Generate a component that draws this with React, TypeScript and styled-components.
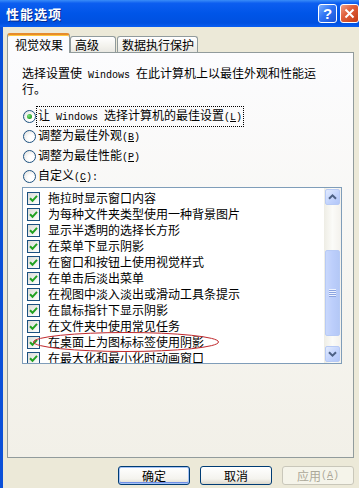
import styled, { createGlobalStyle } from "styled-components";

const GlobalStyle = createGlobalStyle`
  html, body {
    margin: 0;
    padding: 0;
  }
  body {
    width: 359px;
    height: 488px;
    overflow: hidden;
    background: #ece9d8;
    color: #000;
    font-family: "Noto Sans CJK SC", "Noto Sans", sans-serif;
    font-size: 12px;
  }
`;

const Window = styled.div`
  width: 359px;
  height: 488px;
  display: flex;
  flex-direction: column;
  overflow: hidden;
`;

const TitleBar = styled.div`
  height: 27px;
  flex-shrink: 0;
  display: flex;
  align-items: center;
  gap: 3px;
  padding-left: 6px;
  background: linear-gradient(
    #3a8df8 0%,
    #0c5ef0 12%,
    #0055e8 50%,
    #0050e0 85%,
    #0a5ef2 100%
  );
`;

const Title = styled.div`
  flex: 1;
  color: #fff;
  font-weight: bold;
  font-size: 13px;
  letter-spacing: 1px;
  text-shadow: 1px 1px 0 #0a2a8c;
`;

const CaptionButton = styled.div<{ $close?: boolean }>`
  width: 19px;
  height: 19px;
  box-sizing: border-box;
  border: 1px solid #fff;
  border-radius: 3px;
  display: flex;
  align-items: center;
  justify-content: center;
  color: #fff;
  font-family: "Liberation Sans", sans-serif;
  font-weight: bold;
  font-size: 15px;
  background: ${(p) =>
    p.$close
      ? "linear-gradient(135deg, #f0a088 0%, #e0603c 40%, #c43a14 100%)"
      : "linear-gradient(135deg, #7fb2ff 0%, #2f74f4 45%, #1a52d6 100%)"};
`;

const Body = styled.div`
  flex: 1;
  display: flex;
  flex-direction: column;
  border-left: 3px solid #0b50d8;
  padding: 6px 5px 0 4px;
`;

const TabStrip = styled.div`
  display: flex;
  align-items: flex-end;
  height: 20px;
  position: relative;
  z-index: 1;
`;

const Tab = styled.div<{ $active?: boolean; $width: number; $gap?: number }>`
  box-sizing: border-box;
  width: ${(p) => p.$width}px;
  margin-left: ${(p) => p.$gap ?? 0}px;
  height: ${(p) => (p.$active ? 20 : 16)}px;
  margin-bottom: ${(p) => (p.$active ? 0 : 1)}px;
  padding: ${(p) => (p.$active ? "1px 0 0 7px" : "0 0 0 4px")};
  display: flex;
  align-items: center;
  line-height: 13px;
  border: 1px solid #919b9c;
  border-bottom: none;
  border-radius: 3px 3px 0 0;
  ${(p) =>
    p.$active
      ? `
    background: #fcfcfe;
    border-top: 2px solid #e68b2c;
    box-shadow: inset 0 1px 0 #ffc73c;
  `
      : `
    background: linear-gradient(#ffffff, #f3f2ed 60%, #e9e8e2);
  `}
`;

const Panel = styled.div`
  box-sizing: border-box;
  height: 406px;
  margin-top: -1px;
  border: 1px solid #919b9c;
  background: linear-gradient(#fcfcfe, #f6f5f0 60%, #f2f0e8);
  padding: 13px 0 0 14px;
`;

const Description = styled.p`
  margin: 0;
  line-height: 13px;
`;

const Latin = styled.span`
  font-family: "Liberation Mono", monospace;
  font-size: 10px;
`;

const RadioGroup = styled.div`
  margin-top: 11px;
  display: flex;
  flex-direction: column;
`;

const RadioRow = styled.div`
  height: 20px;
  display: flex;
  align-items: center;
`;

const RadioCircle = styled.span<{ $checked?: boolean }>`
  box-sizing: border-box;
  width: 13px;
  height: 13px;
  margin-left: 1px;
  border-radius: 50%;
  border: 1px solid #1c5180;
  background: radial-gradient(circle at 65% 65%, #ffffff 30%, #dcdcd7 100%);
  display: flex;
  align-items: center;
  justify-content: center;

  &::after {
    content: "";
    display: ${(p) => (p.$checked ? "block" : "none")};
    width: 5px;
    height: 5px;
    border-radius: 50%;
    background: radial-gradient(circle at 35% 35%, #7ee07e, #21a121 70%);
  }
`;

const RadioLabel = styled.span<{ $focus?: boolean }>`
  padding: 1px;
  line-height: 14px;
  border: 1px dotted ${(p) => (p.$focus ? "#000" : "transparent")};
`;

const ListBox = styled.div`
  box-sizing: border-box;
  margin-top: 1px;
  width: 320px;
  height: 177px;
  border: 1px solid #7f9db9;
  background: #fff;
  display: flex;
`;

const ItemList = styled.div`
  flex: 1;
  overflow: hidden;
  padding: 2px 0 0 4px;
`;

const Item = styled.div`
  position: relative;
  height: 16px;
  display: flex;
  align-items: center;
  white-space: nowrap;
`;

const CheckBox = styled.span`
  box-sizing: border-box;
  width: 13px;
  height: 13px;
  flex-shrink: 0;
  border: 1px solid #1c5180;
  background: linear-gradient(135deg, #dcdcd7, #ffffff);
  display: flex;
  align-items: center;
  justify-content: center;
`;

const ItemText = styled.span`
  margin-left: 8px;
  line-height: 14px;
`;

const Mark = styled.svg`
  position: absolute;
  left: 5px;
  top: -3px;
  pointer-events: none;
`;

const ScrollBar = styled.div`
  width: 17px;
  box-sizing: border-box;
  padding: 1px;
  display: flex;
  flex-direction: column;
  background: linear-gradient(90deg, #eeede5, #fbfbf8 50%, #f3f1ec);
`;

const ScrollButton = styled.div`
  box-sizing: border-box;
  height: 16px;
  border: 1px solid #b7caf5;
  border-radius: 2px;
  background: linear-gradient(135deg, #e2ebfe, #c3d4fd 55%, #b2c6f8);
  display: flex;
  align-items: center;
  justify-content: center;
`;

const Track = styled.div`
  flex: 1;
  display: flex;
  flex-direction: column;
`;

const Thumb = styled.div`
  box-sizing: border-box;
  margin-top: 45px;
  height: 86px;
  border: 1px solid #b7caf5;
  border-radius: 2px;
  background: linear-gradient(90deg, #c9d8fc, #bccefb 50%, #b4c8f6);
  display: flex;
  align-items: center;
  justify-content: center;
`;

const Grip = styled.div`
  width: 7px;
  height: 8px;
  background: repeating-linear-gradient(
    #eef3ff 0px,
    #eef3ff 1px,
    #8ca4e0 1px,
    #8ca4e0 2px
  );
`;

const Footer = styled.div`
  display: flex;
  justify-content: flex-end;
  gap: 10px;
  margin-top: 8px;
`;

const Button = styled.div<{ $default?: boolean; $disabled?: boolean }>`
  box-sizing: border-box;
  width: 72px;
  height: 19px;
  border-radius: 3px;
  display: flex;
  align-items: center;
  justify-content: center;
  line-height: 14px;
  border: 1px solid ${(p) => (p.$disabled ? "#c9c7ba" : "#003c74")};
  color: ${(p) => (p.$disabled ? "#aca899" : "#000")};
  background: ${(p) =>
    p.$disabled
      ? "#f5f4ea"
      : "linear-gradient(#ffffff, #f4f3ee 70%, #dcd8cc)"};
  box-shadow: ${(p) =>
    p.$default
      ? "inset 0 0 0 1px #a6c3f5, inset 0 -1px 0 1px #6f8fe6"
      : "none"};
`;

const items = [
  "拖拉时显示窗口内容",
  "为每种文件夹类型使用一种背景图片",
  "显示半透明的选择长方形",
  "在菜单下显示阴影",
  "在窗口和按钮上使用视觉样式",
  "在单击后淡出菜单",
  "在视图中淡入淡出或滑动工具条提示",
  "在鼠标指针下显示阴影",
  "在文件夹中使用常见任务",
  "在桌面上为图标标签使用阴影",
  "在最大化和最小化时动画窗口",
];

function Check() {
  return (
    <svg width="9" height="9" viewBox="0 0 9 9">
      <path d="M1 4.2 L3.5 6.8 L8 1.8" stroke="#21a121" strokeWidth="2" fill="none" />
    </svg>
  );
}

function Arrow({ down }: { down?: boolean }) {
  return (
    <svg width="9" height="6" viewBox="0 0 9 6">
      <path
        d={down ? "M1 1.2 L4.5 4.6 L8 1.2" : "M1 4.8 L4.5 1.4 L8 4.8"}
        stroke="#4d6185"
        strokeWidth="2"
        fill="none"
      />
    </svg>
  );
}

function Key({ k }: { k: string }) {
  return (
    <Latin>
      (<u>{k}</u>)
    </Latin>
  );
}

function App() {
  return (
    <>
      <GlobalStyle />
      <Window>
        <TitleBar>
          <Title>性能选项</Title>
          <CaptionButton>?</CaptionButton>
          <CaptionButton $close>
            <svg width="11" height="11" viewBox="0 0 11 11">
              <path d="M1.5 1.5 L9.5 9.5 M9.5 1.5 L1.5 9.5" stroke="#fff" strokeWidth="2" />
            </svg>
          </CaptionButton>
        </TitleBar>
        <Body>
          <TabStrip>
            <Tab $active $width={63}>视觉效果</Tab>
            <Tab $width={46}>高级</Tab>
            <Tab $width={81} $gap={1}>数据执行保护</Tab>
          </TabStrip>
          <Panel>
            <Description>
              选择设置使<Latin> Windows </Latin>在此计算机上以最佳外观和性能运
              <br />
              行。
            </Description>
            <RadioGroup>
              <RadioRow>
                <RadioCircle $checked />
                <RadioLabel $focus>
                  让<Latin> Windows </Latin>选择计算机的最佳设置<Key k="L" />
                </RadioLabel>
              </RadioRow>
              <RadioRow>
                <RadioCircle />
                <RadioLabel>
                  调整为最佳外观<Key k="B" />
                </RadioLabel>
              </RadioRow>
              <RadioRow>
                <RadioCircle />
                <RadioLabel>
                  调整为最佳性能<Key k="P" />
                </RadioLabel>
              </RadioRow>
              <RadioRow>
                <RadioCircle />
                <RadioLabel>
                  自定义<Key k="C" />
                  <Latin>:</Latin>
                </RadioLabel>
              </RadioRow>
            </RadioGroup>
            <ListBox>
              <ItemList>
                {items.map((text, i) => (
                  <Item key={i}>
                    <CheckBox>
                      <Check />
                    </CheckBox>
                    <ItemText>{text}</ItemText>
                    {i === 9 && (
                      <Mark width="188" height="22" viewBox="0 0 188 22">
                        <ellipse
                          cx="94"
                          cy="11"
                          rx="92.5"
                          ry="9.5"
                          fill="none"
                          stroke="#c0282c"
                          strokeWidth="1"
                        />
                      </Mark>
                    )}
                  </Item>
                ))}
              </ItemList>
              <ScrollBar>
                <ScrollButton>
                  <Arrow />
                </ScrollButton>
                <Track>
                  <Thumb>
                    <Grip />
                  </Thumb>
                </Track>
                <ScrollButton>
                  <Arrow down />
                </ScrollButton>
              </ScrollBar>
            </ListBox>
          </Panel>
          <Footer>
            <Button $default>确定</Button>
            <Button>取消</Button>
            <Button $disabled>
              应用<Key k="A" />
            </Button>
          </Footer>
        </Body>
      </Window>
    </>
  );
}

export default App;
